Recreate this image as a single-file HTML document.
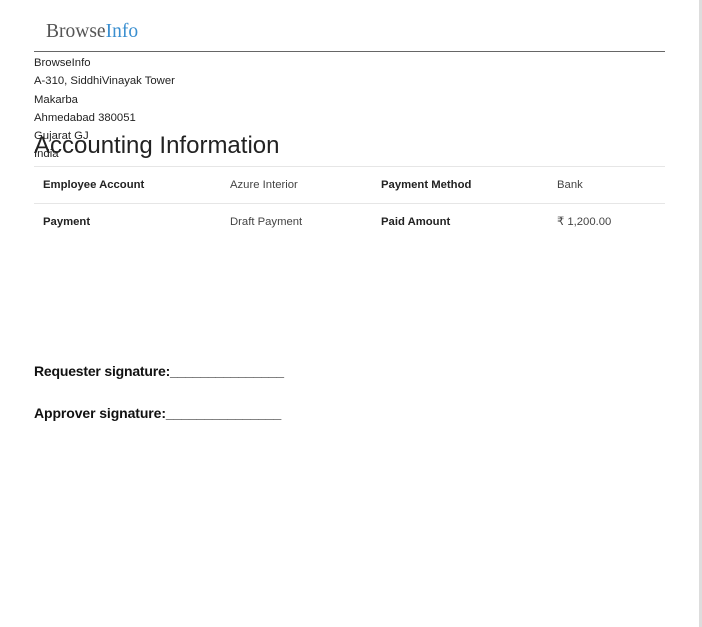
<!DOCTYPE html>
<html><head><style>
body{margin:0;width:702px;height:627px;background:#fff;position:relative;overflow:hidden;font-family:"Liberation Sans",sans-serif;color:#222}
.a{position:absolute;white-space:nowrap}
.addr{font-size:11.3px;line-height:18.3px;left:34px;top:54px}
</style></head><body>
<div class="a" style="left:46px;top:21px;font-family:'Liberation Serif',serif;font-size:19.5px;color:#555">Browse<span style="color:#3a8fd0">Info</span></div>
<div class="a" style="left:34px;top:51px;width:631px;height:1px;background:#666"></div>
<div class="a addr">BrowseInfo<br>A-310, SiddhiVinayak Tower<br>Makarba<br>Ahmedabad 380051<br>Gujarat GJ<br>India</div>
<div class="a" style="left:34px;top:132px;font-size:24px;color:#222">Accounting Information</div>
<div class="a" style="left:34px;top:166px;width:631px;height:1px;background:#e6e6e6"></div>
<div class="a" style="left:34px;top:203px;width:631px;height:1px;background:#e6e6e6"></div>
<div class="a" style="left:43px;top:179px;font-size:11.3px;font-weight:bold">Employee Account</div>
<div class="a" style="left:230px;top:179px;font-size:11.3px;color:#444">Azure Interior</div>
<div class="a" style="left:381px;top:179px;font-size:11.3px;font-weight:bold">Payment Method</div>
<div class="a" style="left:557px;top:179px;font-size:11.3px;color:#444">Bank</div>
<div class="a" style="left:43px;top:216px;font-size:11.3px;font-weight:bold">Payment</div>
<div class="a" style="left:230px;top:216px;font-size:11.3px;color:#444">Draft Payment</div>
<div class="a" style="left:381px;top:216px;font-size:11.3px;font-weight:bold">Paid Amount</div>
<div class="a" style="left:557px;top:215px;font-size:11.3px;color:#444">₹ 1,200.00</div>
<div class="a" style="left:34px;top:363px;font-size:14px;font-weight:bold;color:#111;letter-spacing:-0.2px">Requester signature:_______________</div>
<div class="a" style="left:34px;top:405px;font-size:14px;font-weight:bold;color:#111;letter-spacing:-0.1px">Approver signature:_______________</div>
<div class="a" style="left:699px;top:0;width:3px;height:627px;background:#ddd"></div>
</body></html>
